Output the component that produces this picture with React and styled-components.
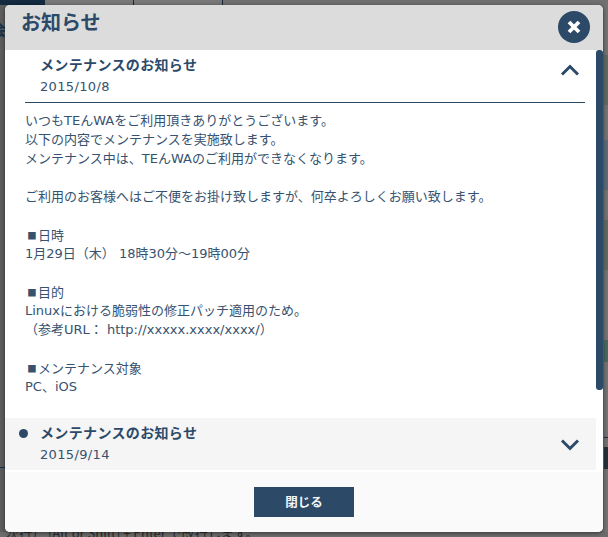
import React from "react";
import styled, { createGlobalStyle } from "styled-components";

const navy = "#2c4a68";
const latin = `"DejaVu Sans", "Noto Sans CJK JP", sans-serif`;

const Global = createGlobalStyle`
  html, body { margin: 0; padding: 0; }
  body { width: 608px; height: 537px; overflow: hidden; background: #6e6e6e; font-family: ${latin}; }
  * { box-sizing: border-box; }
`;

const Page = styled.div`
  position: relative; width: 608px; height: 537px; overflow: hidden; display: flex; flex-direction: column; background: #6c6c6c;
`;
const TopBar = styled.div`
  height: 5px; flex: none; display: flex; background: #707070;
`;
const TopBrand = styled.div`
  width: 45px; background: #132a3f;
`;
const TopTab = styled.div`
  width: ${p => p.$w}px; border-right: 1px solid #1a2a3a; background: #787878;
`;
const Middle = styled.div`
  height: 527px; flex: none; display: flex; justify-content: space-between;
`;
const LeftRail = styled.div`
  width: 5px; background: #5d5d5d; display: flex; flex-direction: column; overflow: hidden;
`;
const RailGlyph = styled.div`
  margin: 14px 0 0 -9px; font: bold 15px/20px "Noto Sans CJK JP", sans-serif; color: #16324a;
`;
const LeftLine = styled.div`
  margin-top: 428px; height: 1px; background: #1a3048;
`;
const RightRail = styled.div`
  width: 4px; background: #737373; display: flex; flex-direction: column;
`;
const Band = styled.div`
  height: ${p => p.$h}px; flex: none; margin-top: ${p => p.$m}px; background: ${p => p.$c};
`;
const BottomText = styled.div`
  margin-top: -6px; padding-left: 6px; white-space: nowrap; font: 13px/14px "Noto Sans CJK JP", sans-serif; color: #2b2b2b;
`;

const Modal = styled.div`
  position: absolute; left: 5px; top: 5px; width: 598px; height: 527px; border-radius: 5px; overflow: hidden;
  display: flex; flex-direction: column; background: #fafafa; box-shadow: 0 1px 4px rgba(0,0,0,.5);
`;
const Header = styled.header`
  height: 45px; flex: none; background: #dcdcdc; padding: 2px 0 0 16px;
  font: bold 20px/30px "Noto Sans CJK JP", sans-serif; color: ${navy};
`;
const CloseButton = styled.button`
  position: absolute; right: 13px; top: 6px; width: 32px; height: 32px; border: 0; padding: 0; border-radius: 50%;
  background: ${navy}; display: flex; align-items: center; justify-content: center;
`;
const Scroller = styled.div`
  height: 420px; flex: none; position: relative; background: #fff;
`;
const Content = styled.div`
  width: 591px; height: 420px; display: flex; flex-direction: column;
`;
const Thumb = styled.div`
  position: absolute; right: 0; top: 0; width: 7px; height: 340px; background: ${navy}; border-radius: 3px;
`;
const ItemHead = styled.div`
  height: ${p => p.$h}px; flex: none; position: relative; padding: 4px 0 0 35px; background: ${p => p.$bg};
`;
const Title = styled.div`
  font: bold 14px/20px "Noto Sans CJK JP", sans-serif; letter-spacing: .35px; color: ${navy};
`;
const DateText = styled.div`
  font: 13px/18px ${latin}; letter-spacing: .35px; color: #36526f; margin-top: 4px;
`;
const Dot = styled.span`
  position: absolute; left: 14px; top: 11px; width: 9px; height: 9px; border-radius: 50%; background: ${navy};
`;
const Chevron = styled.svg`
  position: absolute; left: 555px; top: ${p => p.$top}px; width: 20px; height: 14px;
`;
const Rule = styled.div`
  height: 1px; flex: none; margin: 0 11px 0 20px; background: ${navy};
`;
const Body = styled.div`
  flex: none; height: 315px; padding: 8px 0 0 20px; font: 12.5px/19px ${latin}; color: #36526f;
`;
const Line = styled.div`
  height: 19px; white-space: pre; font-size: 13px;
`;
const Marker = styled.span`
  display: inline-block; width: 13px; font: 13px/19px "Noto Sans CJK JP", sans-serif; transform: scale(.72); transform-origin: 60% 55%;
`;
const Gap = styled.div` height: 2px; flex: none; background: #fff; `;
const Footer = styled.footer`
  flex: 1; background: #fafafa; display: flex; justify-content: center; padding-top: 15px;
`;
const Button = styled.button`
  width: 100px; height: 30px; border: 0; padding: 0; background: ${navy}; color: #f4f6f8;
  font: bold 12.5px/30px "Noto Sans CJK JP", sans-serif;
`;

const lines = [
  "いつもTEんWAをご利用頂きありがとうございます。",
  "以下の内容でメンテナンスを実施致します。",
  "メンテナンス中は、TEんWAのご利用ができなくなります。",
  "",
  "ご利用のお客様へはご不便をお掛け致しますが、何卒よろしくお願い致します。",
  "",
  ["日時"],
  "1月29日（木） 18時30分～19時00分",
  "",
  ["目的"],
  "Linuxにおける脆弱性の修正パッチ適用のため。",
  "（参考URL： http://xxxxx.xxxx/xxxx/）",
  "",
  ["メンテナンス対象"],
  "PC、iOS",
];

export default function App() {
  return (
    <Page>
      <Global />
      <TopBar>
        <TopBrand />
        <TopTab $w={89} />
        <TopTab $w={89} />
      </TopBar>
      <Middle>
        <LeftRail>
          <RailGlyph>会</RailGlyph>
          <LeftLine />
        </LeftRail>
        <RightRail>
          <Band $m={50} $h={50} $c="#5f6b60" />
          <Band $m={35} $h={50} $c="#5b6b7a" />
          <Band $m={30} $h={50} $c="#5f6b60" />
          <Band $m={70} $h={22} $c="#46695e" />
          <Band $m={75} $h={1} $c="#1a3048" />
          <Band $m={9} $h={22} $c="#26303a" />
        </RightRail>
      </Middle>
      <BottomText>次行） [Alt or Shift] + Enter で改行します。</BottomText>
      <Modal>
        <Header>お知らせ</Header>
        <CloseButton aria-label="close">
          <svg width="14" height="14" viewBox="0 0 14 14"><path d="M2 2l10 10M12 2L2 12" stroke="#fff" strokeWidth="3.8" /></svg>
        </CloseButton>
        <Scroller>
          <Content>
            <ItemHead $h={52} $bg="#fff">
              <Title>メンテナンスのお知らせ</Title>
              <DateText>2015/10/8</DateText>
              <Chevron $top={13} viewBox="0 0 20 14"><path d="M2 11.5l8-8 8 8" fill="none" stroke={navy} strokeWidth="3" /></Chevron>
            </ItemHead>
            <Rule />
            <Body>
              {lines.map((l, i) => (
                <Line key={i}>{Array.isArray(l) ? <><Marker>■</Marker>{l[0]}</> : l}</Line>
              ))}
            </Body>
            <ItemHead $h={52} $bg="#f5f5f5">
              <Dot />
              <Title>メンテナンスのお知らせ</Title>
              <DateText>2015/9/14</DateText>
              <Chevron $top={20} viewBox="0 0 20 14"><path d="M2 2.5l8 8 8-8" fill="none" stroke={navy} strokeWidth="3" /></Chevron>
            </ItemHead>
          </Content>
          <Thumb />
        </Scroller>
        <Gap />
        <Footer><Button>閉じる</Button></Footer>
      </Modal>
    </Page>
  );
}
